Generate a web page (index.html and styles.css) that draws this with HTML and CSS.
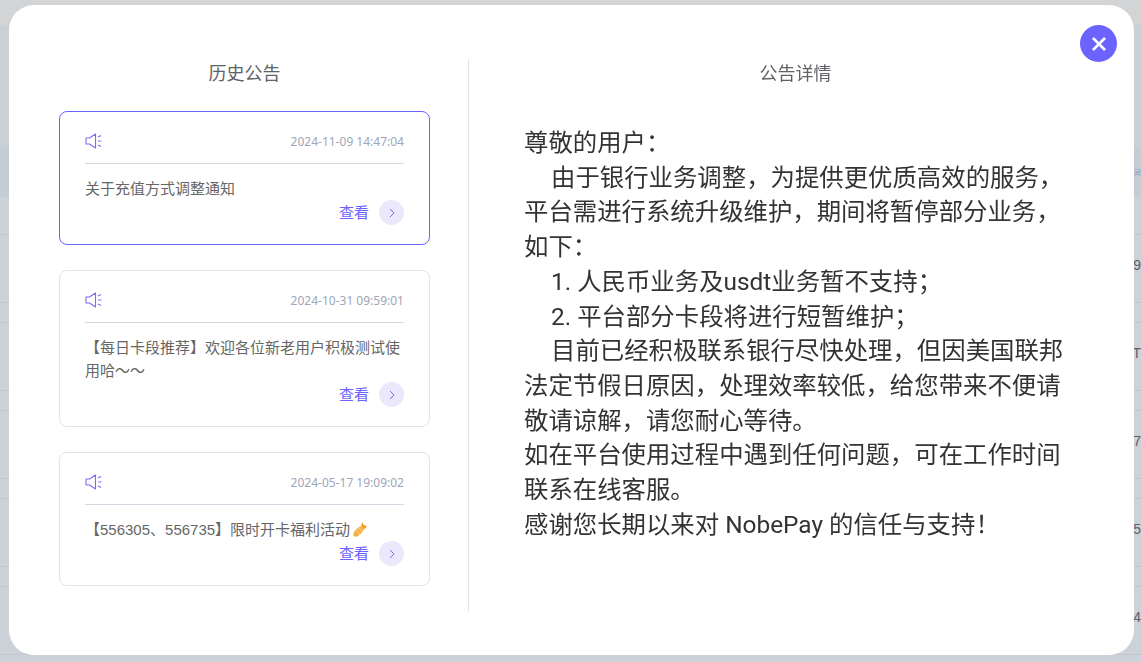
FILE: index.html
```html
<!DOCTYPE html>
<html lang="zh-CN">
<head>
<meta charset="utf-8">
<title>公告</title>
<link rel="stylesheet" href="styles.css">
</head>
<body>
<div class="page">
  <div class="page-top"></div>
  <div class="page-head"></div>
  <div class="page-band"><span class="cell cell-head">间</span></div>
  <div class="page-row first"><span class="cell">9</span></div>
  <div class="page-row"><span class="cell">T</span></div>
  <div class="page-row"><span class="cell">7</span></div>
  <div class="page-row"><span class="cell">5</span></div>
  <div class="page-row"><span class="cell">4</span></div>
  <div class="page-foot"></div>
</div>
<div class="modal">
  <button class="close" aria-label="关闭">
    <svg width="14" height="14" viewBox="0 0 14 14"><path d="M1 1L13 13M13 1L1 13" stroke="#fff" stroke-width="2.600" fill="none"/></svg>
  </button>
  <section class="history">
    <h2 class="title">历史公告</h2>
    <div class="list">
      <article class="card active">
        <div class="card-top">
          <svg class="horn" width="18" height="18" viewBox="0 0 18 18"><path d="M1 6h3.500L10.500 2v14L4.500 12H1z" fill="none" stroke="#7b6cf6" stroke-width="1.100" stroke-linejoin="round"/><path d="M13 5l3-1.500M13 9h3.500M13 13l3 1.500" fill="none" stroke="#7b6cf6" stroke-width="1.100"/></svg>
          <span class="date">2024-11-09 14:47:04</span>
        </div>
        <p class="text">关于充值方式调整通知</p>
        <div class="more"><span class="more-label">查看</span><span class="arrow"><svg width="6" height="10" viewBox="0 0 6 10"><path d="M1 1l4 4-4 4" fill="none" stroke="#7b6cf6" stroke-width="1"/></svg></span></div>
      </article>
      <article class="card">
        <div class="card-top">
          <svg class="horn" width="18" height="18" viewBox="0 0 18 18"><path d="M1 6h3.500L10.500 2v14L4.500 12H1z" fill="none" stroke="#7b6cf6" stroke-width="1.100" stroke-linejoin="round"/><path d="M13 5l3-1.500M13 9h3.500M13 13l3 1.500" fill="none" stroke="#7b6cf6" stroke-width="1.100"/></svg>
          <span class="date">2024-10-31 09:59:01</span>
        </div>
        <p class="text">【每日卡段推荐】欢迎各位新老用户积极测试使用哈～～</p>
        <div class="more"><span class="more-label">查看</span><span class="arrow"><svg width="6" height="10" viewBox="0 0 6 10"><path d="M1 1l4 4-4 4" fill="none" stroke="#7b6cf6" stroke-width="1"/></svg></span></div>
      </article>
      <article class="card">
        <div class="card-top">
          <svg class="horn" width="18" height="18" viewBox="0 0 18 18"><path d="M1 6h3.500L10.500 2v14L4.500 12H1z" fill="none" stroke="#7b6cf6" stroke-width="1.100" stroke-linejoin="round"/><path d="M13 5l3-1.500M13 9h3.500M13 13l3 1.500" fill="none" stroke="#7b6cf6" stroke-width="1.100"/></svg>
          <span class="date">2024-05-17 19:09:02</span>
        </div>
        <p class="text">【556305、556735】限时开卡福利活动<svg class="trumpet" width="16" height="16" viewBox="0 0 16 16"><ellipse cx="6.500" cy="9.500" rx="6.500" ry="3.300" transform="rotate(-45 6.500 9.500)" fill="#f7b044"/><path d="M9 3.500L10.500 0l1 3L15 4l-2.500 3.500z" fill="#f39c1f"/><path d="M3.500 7.500l4.500 4.500M6 5.500l4.500 4.500" stroke="#fde3b0" stroke-width="1.100" stroke-dasharray="1.500 1"/></svg></p>
        <div class="more"><span class="more-label">查看</span><span class="arrow"><svg width="6" height="10" viewBox="0 0 6 10"><path d="M1 1l4 4-4 4" fill="none" stroke="#7b6cf6" stroke-width="1"/></svg></span></div>
      </article>
    </div>
  </section>
  <section class="detail">
    <h2 class="title">公告详情</h2>
    <div class="content">
      <p>尊敬的用户：</p>
      <p class="ind">由于银行业务调整，为提供更优质高效的服务，平台需进行系统升级维护，期间将暂停部分业务，如下：</p>
      <p class="ind">1. 人民币业务及usdt业务暂不支持；</p>
      <p class="ind">2. 平台部分卡段将进行短暂维护；</p>
      <p class="ind">目前已经积极联系银行尽快处理，但因美国联邦法定节假日原因，处理效率较低，给您带来不便请敬请谅解，请您耐心等待。</p>
      <p>如在平台使用过程中遇到任何问题，可在工作时间联系在线客服。</p>
      <p>感谢您长期以来对 NobePay 的信任与支持！</p>
    </div>
  </section>
</div>
</body>
</html>
```
FILE: styles.css
```css
* { box-sizing: border-box; }
html, body { margin: 0; height: 100%; overflow: hidden; }
body { background: #cdd1d8; font-family: "Liberation Sans", "Noto Sans CJK SC", sans-serif; }
.page { height: 662px; display: flex; flex-direction: column; }
.page-top { height: 25px; background: #d3d4d6; flex: none; }
.page-head { height: 122px; background: #cbd0d7; flex: none; }
.page-band { height: 50px; margin-bottom: 37px; background: #c4ccd6; flex: none; display: flex; justify-content: flex-end; align-items: center; }
.page-row { height: 69px; margin-bottom: 19px; padding-bottom: 7px; flex: none; display: flex; justify-content: flex-end; align-items: center; border-top: 1px solid #c1c6ce; border-bottom: 1px solid #c1c6ce; }
.page-foot { flex: 1; background: #d0d3d7; }
.cell { font-size: 14px; color: #5c6068; }
.cell-head { color: #8ea2bb; font-size: 7px; }
.modal {
  position: fixed; left: 9px; top: 5px; width: 1125px; height: 650px;
  background: #fff; border-radius: 25px; display: flex; padding: 54px 0 44px 50px;
}
.close {
  position: absolute; right: 17px; top: 20px; width: 37px; height: 37px;
  border: 0; border-radius: 50%; background: #6c63ff; padding: 0;
  display: flex; align-items: center; justify-content: center;
}
.history { width: 410px; border-right: 1px solid #e1e3e6; padding-right: 38px; flex: none; }
.detail { flex: 1; padding: 0 63px 0 55px; }
.title { margin: 0; font-size: 18px; font-weight: 400; color: #606266; text-align: center; line-height: 30px; }
.detail .title { padding-right: 4px; }
.list { margin-top: 22px; display: flex; flex-direction: column; gap: 25px; }
.card { border: 1px solid #dfe3ec; border-radius: 8px; padding: 16px 25px 19px; background: #fff; }
.card.active { border-color: #6c63ff; }
.card-top { display: flex; justify-content: space-between; align-items: center; height: 36px; border-bottom: 1px solid #d5d8e2; padding-bottom: 9px; }
.horn { display: block; }
.date { font-size: 12px; color: #9ea6b8; font-family: "Noto Sans", "Liberation Sans", sans-serif; }
.text { margin: 13px 0 0; font-size: 15px; line-height: 23px; color: #666; }
.trumpet { vertical-align: -3px; margin-left: 2px; }
.more { display: flex; justify-content: flex-end; align-items: center; gap: 10px; height: 25px; }
.more-label { font-size: 15px; color: #6c63ff; padding-bottom: 2px; }
.arrow { width: 25px; height: 25px; border-radius: 50%; background: #ebe8fb; display: flex; align-items: center; justify-content: center; }
.content { margin-top: 37px; font-size: 24.400px; line-height: 34.700px; color: #333; font-family: "Roboto", "Noto Sans CJK SC", sans-serif; }
.content p { margin: 0; }
.ind { text-indent: 27px; }
```
